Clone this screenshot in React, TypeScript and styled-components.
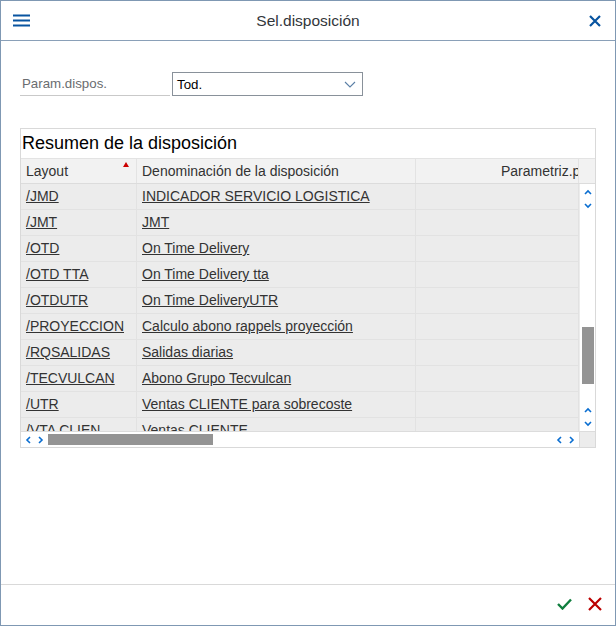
import React from 'react';
import styled, { createGlobalStyle } from 'styled-components';

const GlobalStyle = createGlobalStyle`
  html, body {
    margin: 0;
    padding: 0;
    background: #ffffff;
  }
  * {
    box-sizing: border-box;
  }
`;

const Window = styled.div`
  width: 616px;
  height: 626px;
  border: 1px solid #7f98b3;
  background: #ffffff;
  display: flex;
  flex-direction: column;
  font-family: 'Liberation Sans', Arial, sans-serif;
`;

const Header = styled.div`
  height: 40px;
  flex: none;
  border-bottom: 1px solid #8aa0b8;
  display: grid;
  grid-template-columns: 40px 1fr 40px;
  align-items: center;

  .title {
    text-align: center;
    font-size: 15.5px;
    color: #32363a;
  }
`;

const IconSlot = styled.div`
  display: flex;
  align-items: center;
  justify-content: center;
`;

const Content = styled.div`
  flex: 1;
  padding: 31px 19px 0 19px;
`;

const ParamRow = styled.div`
  display: flex;
  align-items: flex-end;
  gap: 2px;
`;

const ParamLabel = styled.div`
  width: 150px;
  height: 24px;
  padding: 4px 0 0 2px;
  border-bottom: 1px solid #c9c9c9;
  font-size: 13.3px;
  color: #6a6d70;
`;

const Select = styled.div`
  width: 191px;
  height: 24px;
  border: 1px solid #89919a;
  display: flex;
  align-items: center;
  justify-content: space-between;
  padding: 0 6px 0 4px;
  font-size: 13.3px;
  color: #000000;
`;

const Panel = styled.div`
  margin-top: 32px;
  width: 576px;
  height: 320px;
  border: 1px solid #d9d9d9;
  display: flex;
  flex-direction: column;
`;

const PanelTitle = styled.div`
  height: 29px;
  flex: none;
  padding: 4px 0 0 1px;
  font-size: 18px;
  color: #000000;
`;

const HeaderRow = styled.div`
  height: 26px;
  flex: none;
  display: grid;
  grid-template-columns: 116px 279px 163px 16px;
  background: #f2f2f2;
  border-top: 1px solid #e3e3e3;
  border-bottom: 1px solid #dcdcdc;
`;

const HeaderCell = styled.div<{ $indent?: number }>`
  position: relative;
  padding: 4px 0 0 ${({ $indent }) => $indent ?? 5}px;
  font-size: 14px;
  color: #333333;
  white-space: nowrap;
  overflow: hidden;
  border-right: 1px solid #e3e3e3;
`;

const SortMark = styled.span`
  position: absolute;
  top: 3px;
  right: 7px;
  width: 0;
  height: 0;
  border-left: 3px solid transparent;
  border-right: 3px solid transparent;
  border-bottom: 5px solid #cc0000;
`;

const Body = styled.div`
  flex: 1;
  display: grid;
  grid-template-columns: 1fr 16px;
  grid-template-rows: 1fr 16px;
  min-height: 0;
`;

const Rows = styled.div`
  overflow: hidden;
  background: #ececec;
`;

const Row = styled.div`
  height: 26px;
  display: grid;
  grid-template-columns: 116px 279px 163px;
  border-bottom: 1px solid #e2e2e2;
`;

const Cell = styled.div`
  padding: 4px 5px 0 5px;
  font-size: 14px;
  color: #333333;
  white-space: nowrap;
  overflow: hidden;
  border-right: 1px solid #e2e2e2;

  a {
    color: #333333;
    text-decoration: underline;
  }
`;

const VScroll = styled.div`
  background: #ffffff;
  display: flex;
  flex-direction: column;
  align-items: center;
  padding: 2px 0 1px 0;
  border-left: 1px solid #ececec;
`;

const ArrowButton = styled.div<{ $w?: number; $h?: number }>`
  width: ${({ $w }) => $w ?? 12}px;
  height: ${({ $h }) => $h ?? 13}px;
  flex: none;
  display: flex;
  align-items: center;
  justify-content: center;
  background: #ffffff;
`;

const Track = styled.div`
  flex: 1;
  width: 12px;
`;

const VThumb = styled.div<{ $offset: number; $size: number }>`
  margin-top: ${({ $offset }) => $offset}px;
  height: ${({ $size }) => $size}px;
  background: #949494;
`;

const HScroll = styled.div`
  background: #ffffff;
  border-top: 1px solid #dcdcdc;
  display: flex;
  align-items: center;
  padding: 0 2px 0 1px;
`;

const HThumb = styled.div<{ $offset: number; $size: number }>`
  margin-left: ${({ $offset }) => $offset}px;
  width: ${({ $size }) => $size}px;
  height: 11px;
  background: #949494;
`;

const Spacer = styled.div`
  flex: 1;
`;

const Corner = styled.div`
  background: #ececec;
  border-top: 1px solid #dcdcdc;
  border-left: 1px solid #dcdcdc;
`;

const Footer = styled.div`
  height: 41px;
  flex: none;
  border-top: 1px solid #d9d9d9;
  display: flex;
  align-items: center;
  justify-content: flex-end;
  gap: 16px;
  padding: 0 13px 2px 0;
`;

const rows = [
  ['/JMD', 'INDICADOR SERVICIO LOGISTICA'],
  ['/JMT', 'JMT'],
  ['/OTD', 'On Time Delivery'],
  ['/OTD TTA', 'On Time Delivery tta'],
  ['/OTDUTR', 'On Time DeliveryUTR'],
  ['/PROYECCION', 'Calculo abono rappels proyección'],
  ['/RQSALIDAS', 'Salidas diarias'],
  ['/TECVULCAN', 'Abono Grupo Tecvulcan'],
  ['/UTR', 'Ventas CLIENTE para sobrecoste'],
  ['/VTA CLIEN', 'Ventas CLIENTE'],
];

const Chevron = ({ dir }: { dir: 'up' | 'down' | 'left' | 'right' }) => {
  const paths = {
    up: 'M1 5 L4 2 L7 5',
    down: 'M1 2 L4 5 L7 2',
    left: 'M5 1 L2 4 L5 7',
    right: 'M2 1 L5 4 L2 7',
  };
  const vertical = dir === 'up' || dir === 'down';
  return (
    <svg width={vertical ? 8 : 7} height={vertical ? 7 : 8} viewBox={vertical ? '0 0 8 7' : '0 0 7 8'}>
      <path d={paths[dir]} fill="none" stroke="#0a6ed1" strokeWidth="1.6" />
    </svg>
  );
};

const App = (): JSX.Element => (
  <>
    <GlobalStyle />
    <Window>
      <Header>
        <IconSlot>
          <svg width="17" height="13" viewBox="0 0 17 13">
            <rect x="0" y="0.5" width="17" height="2" fill="#0854a0" />
            <rect x="0" y="5.5" width="17" height="2" fill="#0854a0" />
            <rect x="0" y="10.5" width="17" height="2" fill="#0854a0" />
          </svg>
        </IconSlot>
        <div className="title">Sel.disposición</div>
        <IconSlot>
          <svg width="12" height="12" viewBox="0 0 12 12">
            <path d="M1 1 L11 11 M11 1 L1 11" stroke="#0854a0" strokeWidth="2.2" />
          </svg>
        </IconSlot>
      </Header>

      <Content>
        <ParamRow>
          <ParamLabel>Param.dispos.</ParamLabel>
          <Select>
            <span>Tod.</span>
            <svg width="12" height="7" viewBox="0 0 12 7">
              <path d="M1 1 L6 6 L11 1" fill="none" stroke="#5b7fa6" strokeWidth="1.1" />
            </svg>
          </Select>
        </ParamRow>

        <Panel>
          <PanelTitle>Resumen de la disposición</PanelTitle>
          <HeaderRow>
            <HeaderCell>
              Layout
              <SortMark />
            </HeaderCell>
            <HeaderCell>Denominación de la disposición</HeaderCell>
            <HeaderCell $indent={85}>Parametriz.para usuario</HeaderCell>
            <div />
          </HeaderRow>
          <Body>
            <Rows>
              {rows.map(([layout, name]) => (
                <Row key={layout}>
                  <Cell>
                    <a>{layout}</a>
                  </Cell>
                  <Cell>
                    <a>{name}</a>
                  </Cell>
                  <Cell />
                </Row>
              ))}
            </Rows>
            <VScroll>
              <ArrowButton>
                <Chevron dir="up" />
              </ArrowButton>
              <ArrowButton>
                <Chevron dir="down" />
              </ArrowButton>
              <Track>
                <VThumb $offset={115} $size={57} />
              </Track>
              <ArrowButton>
                <Chevron dir="up" />
              </ArrowButton>
              <ArrowButton>
                <Chevron dir="down" />
              </ArrowButton>
            </VScroll>
            <HScroll>
              <ArrowButton $w={12} $h={13}>
                <Chevron dir="left" />
              </ArrowButton>
              <ArrowButton $w={12} $h={13}>
                <Chevron dir="right" />
              </ArrowButton>
              <HThumb $offset={2} $size={165} />
              <Spacer />
              <ArrowButton $w={12} $h={13}>
                <Chevron dir="left" />
              </ArrowButton>
              <ArrowButton $w={12} $h={13}>
                <Chevron dir="right" />
              </ArrowButton>
            </HScroll>
            <Corner />
          </Body>
        </Panel>
      </Content>

      <Footer>
        <svg width="15" height="12" viewBox="0 0 15 12">
          <path d="M1 6 L5.5 10.5 L14 1.5" fill="none" stroke="#107e3e" strokeWidth="2.4" />
        </svg>
        <svg width="14" height="14" viewBox="0 0 14 14">
          <path d="M1 1 L13 13 M13 1 L1 13" stroke="#bb0000" strokeWidth="2.2" />
        </svg>
      </Footer>
    </Window>
  </>
);

export default App;
